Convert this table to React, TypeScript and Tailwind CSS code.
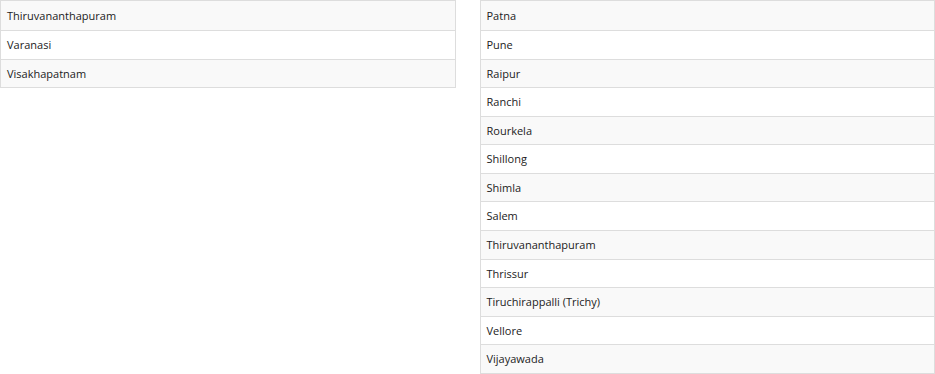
const left = ['Thiruvananthapuram', 'Varanasi', 'Visakhapatnam'];
const right = [
  'Patna',
  'Pune',
  'Raipur',
  'Ranchi',
  'Rourkela',
  'Shillong',
  'Shimla',
  'Salem',
  'Thiruvananthapuram',
  'Thrissur',
  'Tiruchirappalli (Trichy)',
  'Vellore',
  'Vijayawada',
];

function CityTable({ cities }: { cities: string[] }) {
  return (
    <table className="w-full border-collapse border border-[#dddddd]">
      <tbody>
        {cities.map((c, i) => (
          <tr key={c + i} className={i % 2 === 0 ? 'bg-[#f9f9f9]' : 'bg-white'}>
            <td
              className={
                'border-t border-[#dddddd] px-[6px] pb-[6px] text-[11px] leading-[15.58px] text-[#222222] ' +
                (i === 0 ? 'pt-[7.42px]' : 'pt-[6px]')
              }
            >
              {c}
            </td>
          </tr>
        ))}
      </tbody>
    </table>
  );
}

export default function App() {
  return (
    <div className="w-[935px] bg-white font-['Open_Sans',sans-serif]">
      <div className="grid grid-cols-2 gap-6 items-start">
        <CityTable cities={left} />
        <CityTable cities={right} />
      </div>
    </div>
  );
}
